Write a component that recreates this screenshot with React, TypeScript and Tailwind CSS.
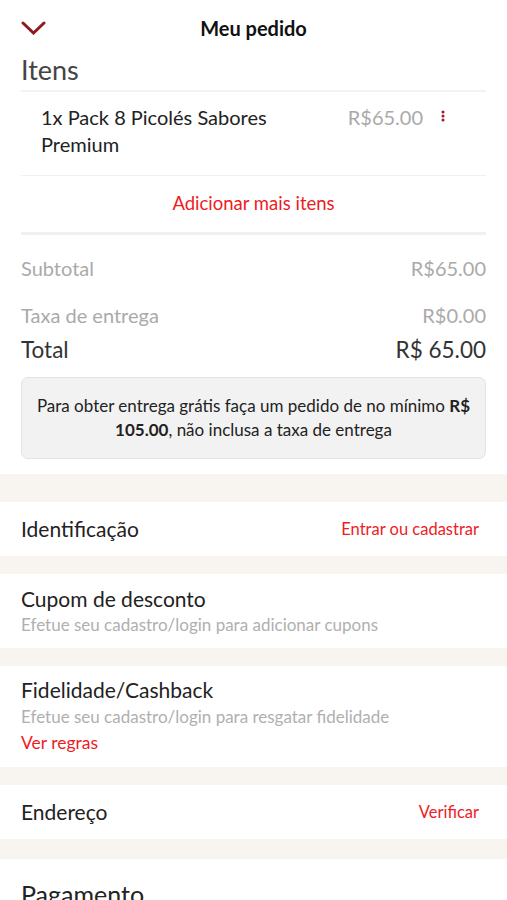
import React from "react";

function Gap({ h }: { h: string }) {
  return <div className={`${h} bg-[#f8f4ef]`} />;
}

export default function App() {
  return (
    <main className="w-[507px] h-[900px] overflow-hidden bg-white text-[#222] font-['Lato','Noto_Sans',sans-serif]">
      <header className="relative flex items-center justify-center h-[56px]">
        <svg
          className="absolute left-[21px] top-[21px]"
          width="25"
          height="14"
          viewBox="0 0 25 14"
          fill="none"
        >
          <path d="M2 2 L12.5 12 L23 2" stroke="#8e1a1f" strokeWidth="3" strokeLinecap="round" />
        </svg>
        <h1 className="text-[20px] font-bold text-[#111]">Meu pedido</h1>
      </header>

      <section className="px-[21px]">
        <h2 className="text-[27px] leading-[30px] text-[#444] -mt-[1px]">Itens</h2>
        <div className="h-[2px] bg-[#f2f2f2] mt-[5px]" />
        <div className="flex items-start pl-[20px] pt-[12px] pb-[17px]">
          <p className="flex-1 text-[20px] leading-[27px] text-[#222]">
            1x Pack 8 Picolés Sabores
            <br />
            Premium
          </p>
          <span className="text-[20px] leading-[27px] text-[#aaa] mr-[18px]">R$65.00</span>
          <svg className="mt-[6px] mr-[41px]" width="4" height="12" viewBox="0 0 4 12">
            <circle cx="2" cy="2" r="1.5" fill="#9b1b24" />
            <circle cx="2" cy="6" r="1.5" fill="#9b1b24" />
            <circle cx="2" cy="10" r="1.5" fill="#9b1b24" />
          </svg>
        </div>
        <div className="h-[1px] bg-[#f0f0f0]" />
        <div className="h-[56px] flex items-center justify-center text-[18.5px] text-[#ee1c25]">
          Adicionar mais itens
        </div>
        <div className="h-[3px] bg-[#f0f0f0]" />

        <div className="flex justify-between text-[20px] text-[#aaa] mt-[22px] leading-[22px]">
          <span>Subtotal</span>
          <span>R$65.00</span>
        </div>
        <div className="flex justify-between text-[20px] text-[#aaa] mt-[25px] leading-[22px]">
          <span>Taxa de entrega</span>
          <span>R$0.00</span>
        </div>
        <div className="flex justify-between text-[22.5px] text-[#333] mt-[11px] leading-[26px]">
          <span>Total</span>
          <span>R$ 65.00</span>
        </div>
        <div className="mt-[14px] rounded-[7px] border border-[#e3e3e3] bg-[#f2f2f2] px-[2px] py-[16px] text-center text-[17px] leading-[24px] text-[#222]">
          Para obter entrega grátis faça um pedido de no mínimo <b>R$ 105.00</b>, não inclusa a taxa de entrega
        </div>
      </section>

      <div className="mt-[15px]" />
      <Gap h="h-[28px]" />

      <section className="h-[54px] flex items-center justify-between pl-[21px] pr-[28px]">
        <span className="text-[21px] text-[#222]">Identificação</span>
        <span className="text-[16.5px] text-[#ee1c25]">Entrar ou cadastrar</span>
      </section>
      <Gap h="h-[18px]" />

      <section className="h-[74px] flex flex-col justify-center px-[21px]">
        <span className="text-[21px] leading-[26px] text-[#222]">Cupom de desconto</span>
        <span className="text-[17px] leading-[22px] text-[#b0b0b0] mt-[2px]">
          Efetue seu cadastro/login para adicionar cupons
        </span>
      </section>
      <Gap h="h-[18px]" />

      <section className="h-[101px] flex flex-col px-[21px] pt-[11px]">
        <span className="text-[21px] leading-[26px] text-[#222]">Fidelidade/Cashback</span>
        <span className="text-[17px] leading-[22px] text-[#b0b0b0] mt-[3px]">
          Efetue seu cadastro/login para resgatar fidelidade
        </span>
        <span className="text-[17.5px] leading-[22px] text-[#ee1c25] mt-[4px]">Ver regras</span>
      </section>
      <Gap h="h-[18px]" />

      <section className="h-[54px] flex items-center justify-between pl-[21px] pr-[28px]">
        <span className="text-[21px] text-[#222]">Endereço</span>
        <span className="text-[16.5px] text-[#ee1c25]">Verificar</span>
      </section>
      <Gap h="h-[20px]" />

      <section className="px-[21px] pt-[17px]">
        <span className="text-[25px] text-[#222]">Pagamento</span>
      </section>
    </main>
  );
}
